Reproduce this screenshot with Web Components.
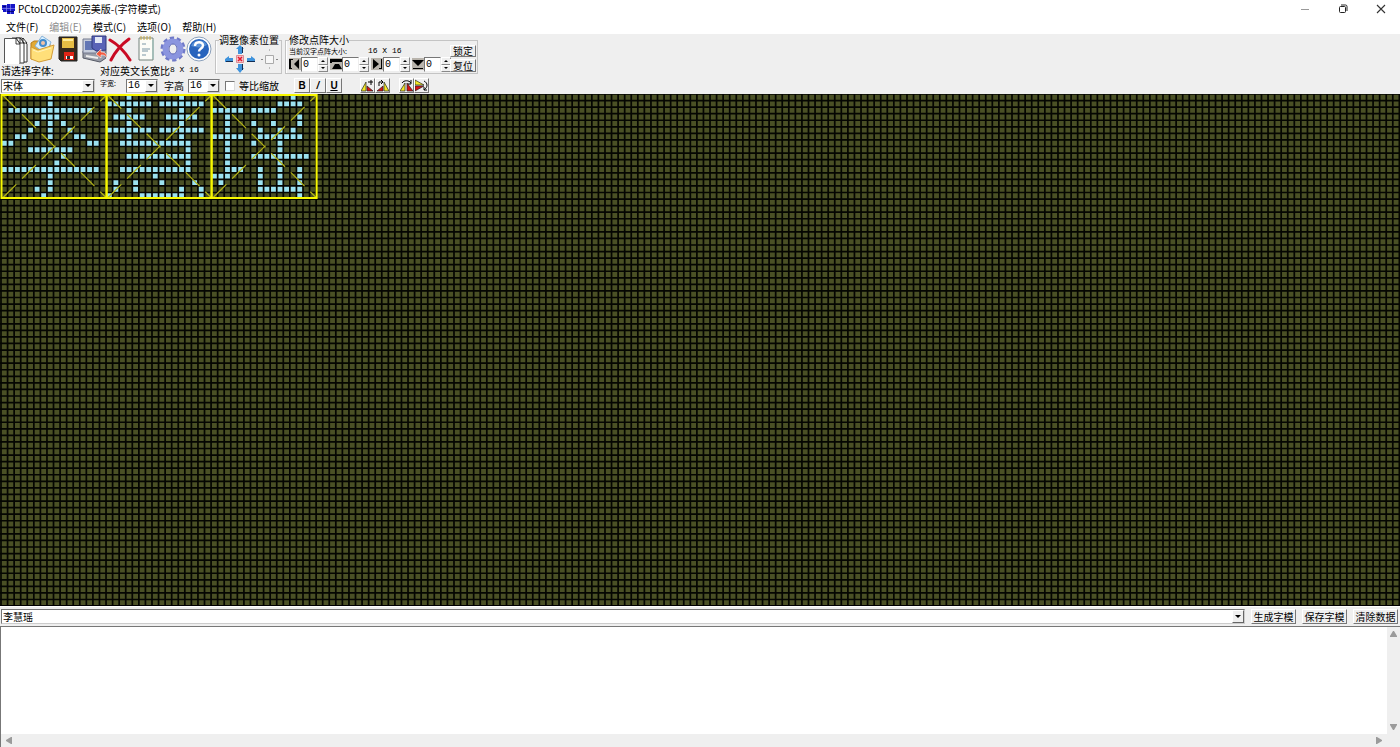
<!DOCTYPE html>
<html lang="zh-CN">
<head>
<meta charset="utf-8">
<title>PCtoLCD2002完美版-(字符模式)</title>
<style>
html,body{margin:0;height:100%}
body{font:10px/12px "Noto Sans CJK SC","Noto Sans",sans-serif;color:#000;background:#efefef;overflow:hidden}
</style>
</head>
<body>
<lcd-app></lcd-app>
<script>
const define = (name, html, setup) => customElements.define(name, class extends HTMLElement {
  connectedCallback() {
    if (this.shadowRoot) return;
    const t = document.createElement('template');
    t.innerHTML = typeof html === 'function' ? html(this) : html;
    this.attachShadow({mode: 'open'}).appendChild(t.content.cloneNode(true));
    if (setup) setup(this);
  }
});

define('title-bar', `<style>
:host{display:flex;align-items:center;height:18px;background:#fff;padding-left:2px;gap:3px}
.logo{width:13px;height:12px}
h1{font:inherit;margin:0;flex:1;line-height:18px}
button{border:0;background:none;padding:0;width:38px;height:18px;display:grid;place-items:center}
nav{display:flex}
</style>
<svg class="logo" viewBox="0 0 13 12"><path fill="#1616c8" d="M0 2h5V1h8v7h-1v3H5V9H1V7H0z"/><path stroke="#9a9af0" stroke-width=".6" d="M4.500 2v7M8.500 1v10M0 5.500h13"/><path stroke="#000060" stroke-width=".8" d="M5 8.500h7M1 3.500h3"/></svg>
<h1><slot></slot></h1>
<nav>
<button aria-label="最小化"><svg width="10" height="10"><path d="M1 5.500h8" stroke="#999"/></svg></button>
<button aria-label="还原"><svg width="10" height="10" fill="none" stroke="#222"><rect x="1.500" y="2.500" width="6" height="6" rx="1"/><path d="M3 1h4.500a1.500 1.500 0 0 1 1.500 1.500V7"/></svg></button>
<button aria-label="关闭"><svg width="10" height="10"><path d="M1 1l8 8M9 1l-8 8" stroke="#333" stroke-width="1.100"/></svg></button>
</nav>`);

define('menu-bar', `<style>
:host{display:flex;align-items:end;height:16px;background:#fff;padding-left:6px;gap:11px}
</style><slot></slot>`);
define('menu-item', el => `<style>
:host{display:block}
button{font:inherit;line-height:14px;border:0;padding:0;background:none;color:#000;display:block}
button:disabled{color:#8c8c8c}
</style><button ${el.hasAttribute('disabled') ? 'disabled' : ''}><slot></slot></button>`);

define('flat-button', el => `<style>
:host{display:block}
button{box-sizing:border-box;width:100%;height:100%;font:inherit;line-height:10px;padding:0;display:grid;place-items:center;color:#000;background:#efefef;border:1px solid;border-color:#fff #777 #777 #fff;white-space:nowrap}
</style><button aria-label="${el.getAttribute('label') || el.textContent}"><slot></slot></button>`);

define('tool-button', el => `<style>
:host{display:block;width:26px;height:30px}
button{border:0;background:none;padding:0;width:100%;height:100%;display:block}
::slotted(svg){display:block;width:26px;height:30px}
</style><button aria-label="${el.getAttribute('label')}"><slot></slot></button>`);

define('group-box', el => `<style>
:host{display:block}
fieldset{box-sizing:border-box;height:100%;margin:0;min-width:0;padding:0 1px 0 3px;border:1px solid #c4c4c4;box-shadow:inset 1px 0 #fff}
legend{padding:0;line-height:10px;height:10px;white-space:nowrap}
</style><fieldset><legend>${el.getAttribute('label')}</legend><slot></slot></fieldset>`);

define('spin-box', el => `<style>
:host{display:flex;height:15px;width:39px}
input{box-sizing:border-box;width:17px;height:15px;font:10px/12px "Liberation Mono",monospace;padding:0 0 0 1px;background:#fff;border:1px solid;border-color:#777 #eee #eee #777;border-radius:0;appearance:textfield;margin:0;color:#000}
input::-webkit-inner-spin-button{appearance:none;display:none}
.arrows{display:flex;flex-direction:column;width:10px}
.arrows button{box-sizing:border-box;flex:1;min-height:0;padding:0;border:1px solid;border-color:#fff #888 #888 #fff;background:#efefef;display:grid;place-items:center}
</style><slot></slot><input type="number" value="0" aria-label="${el.getAttribute('label')}"><span class="arrows"><button aria-label="增加"><svg width="4" height="2"><path d="M0 2l2-2 2 2z"/></svg></button><button aria-label="减少"><svg width="4" height="2"><path d="M0 0h4l-2 2z"/></svg></button></span>`);

const combo = (id, value, label) => `<span class="combo"><select id="${id}" ${label ? `aria-label="${label}"` : ''}><option>${value}</option></select><i><svg width="6" height="3"><path d="M0 0h6l-3 3z"/></svg></i></span>`;
const comboCss = `
.combo{display:grid;box-sizing:border-box;border:1px solid;border-color:#777 #ccc #ccc #777;background:#fff;height:14px}
.combo select{grid-area:1/1;appearance:none;border:0;border-radius:0;background:none;margin:0;padding:0 0 0 1px;font:inherit;line-height:12px;height:12px;width:100%;color:#000}
.combo i{grid-area:1/1;justify-self:end;box-sizing:border-box;width:12px;height:12px;display:grid;place-items:center;background:#efefef;border:1px solid;border-color:#fff #666 #666 #fff;pointer-events:none}`;

define('tool-bar', `<style>
:host{display:flex;flex-direction:column;height:60px;background:#efefef;box-sizing:border-box}
.top{display:flex;height:43px}
.left{width:215px;display:flex;flex-direction:column}
.icons{display:flex;padding:1px 0 0 4px;height:29px}
.caps{display:flex;line-height:13px;padding-left:1px;height:13px}
.caps label{width:99px}
.mono{font:8px/12px "Liberation Mono",monospace}
group-box{margin-top:1px;height:39px}
.pos{width:67px}
.size{width:193px;margin-left:3px}
.pad{display:flex;align-items:center;justify-content:space-between;height:28px;padding:0 2px 0 5px}
.cols{display:grid;grid-template-columns:161px 26px;height:27px}
.info{display:flex;height:12px;align-items:center;font-size:7px;gap:21px}
.spins{display:flex;gap:2px}
.pic{display:block}
.locks{display:grid;grid-template-rows:12px 13px;gap:2px}
.bottom{display:flex;align-items:center;height:17px;padding-left:1px;box-sizing:border-box}
${comboCss}
.font{width:94px}
.num{width:32px;font-family:"Liberation Mono",monospace}
.bottom .small{font-size:7px;width:26px;margin-left:5px;align-self:start}
.bottom .high{margin:0 4px 0 6px}
.num .combo{width:32px}
.check{display:flex;align-items:center;gap:4px;margin-left:5px;width:69px}
.check input{appearance:none;box-sizing:border-box;width:10px;height:10px;margin:0;background:#fff;border:1px solid;border-color:#777 #ddd #ddd #777}
.btns{display:flex}
.btns flat-button{width:16px;height:15px;font:bold 10px/12px "Liberation Sans",sans-serif}
.btns svg{display:block}
.rot{margin-left:18px}.rot flat-button,.flip flat-button{width:15px}.flip{margin-left:9px}
</style>
<div class="top">
 <div class="left">
  <div class="icons">
  <tool-button label="新建"><svg viewBox="0 0 26 30"><path d="M0 29V4h12l4 5v20z" fill="#fff"/><path d="M12 3h6l5 6v18h-5" fill="#fff" stroke="#333"/><path d="M8 3h8l4 5v20h-5" fill="#fff" stroke="#333"/><path d="M.5 28V3.500H12l4 5V28" fill="#fff" stroke="#555"/><path d="M12 3v6h4zM16 3v5h4zM19 3v5h4z" fill="#fff" stroke="#111" stroke-width=".8"/></svg></tool-button>
  <tool-button label="打开"><svg viewBox="0 0 26 30"><path d="M1 8l3-2h5l2 3h9v15H1z" fill="#e2aa34" stroke="#b77c1c"/><path d="M12 1l9 6-5 12-11-8z" fill="#d8efff" stroke="#88b3d8"/><circle cx="13" cy="8" r="4" fill="#438ccc"/><circle cx="13" cy="8" r="2" fill="#f2c3a7"/><path d="M1 12l7 3 16-5-3 14-12 3-8-3z" fill="#ffdf79" stroke="#d29b36"/><path d="M3 15l5 2 13-4" stroke="#fff4ba" fill="none"/></svg></tool-button>
  <tool-button label="保存"><svg viewBox="0 0 26 30"><path d="M3 2h18v24H5l-2-2z" fill="#37291c" stroke="#222"/><path d="M6 3h12v10H6z" fill="#e7bd45"/><path d="M7 4h10v2H7z" fill="#ffec9b"/><path d="M8 17h10v8H8z" fill="#e12516"/><path d="M10 21h7v3h-7z" fill="#fff"/><path d="M11 21h3v3h-3z" fill="#333"/></svg></tool-button>
  <tool-button label="另存为"><svg viewBox="0 0 26 30"><path d="M1 16l5-4 18 3v8l-6 4-17-4z" fill="#999da8" stroke="#555965"/><path d="M1 4h14v14H1z" fill="#c7cedc" stroke="#73798d"/><path d="M3 6h10v9H3z" fill="#6276b5"/><path d="M10 1h14v14l-10 1-4-3z" fill="#5962b6" stroke="#30387d"/><path d="M13 2h7v6h-7z" fill="#e3e8f5"/><path d="M4 21l12 2" stroke="#eee" stroke-width="2"/><path d="M25 23c0-5-3-6-6-6v-3l-5 5 5 4v-3c3 0 4 0 6 3z" fill="#f35b3e" stroke="#fff" stroke-width=".6"/></svg></tool-button>
  <tool-button label="删除"><svg viewBox="0 0 26 30"><path d="M2 5c9 5 15 12 20 20M21 4C14 9 7 17 3 25" stroke="#c90a23" stroke-width="3" stroke-linecap="round" fill="none"/></svg></tool-button>
  <tool-button label="文档"><svg viewBox="0 0 26 30"><path d="M5 3h14v22H5z" fill="#fcfcf7" stroke="#75837c"/><path d="M7 1v4M10 1v4M13 1v4M16 1v4" stroke="#c4a643"/><path d="M8 9h4M8 14h8M8 16h6M8 20h4" stroke="#7a96a5"/><path d="M19 5v19" stroke="#a5bdb8" stroke-width="2"/></svg></tool-button>
  <tool-button label="选项"><svg viewBox="0 0 26 30"><circle cx="13" cy="14" r="11" fill="none" stroke="#6f79c8" stroke-width="3" stroke-dasharray="4.200 2.710"/><circle cx="13" cy="14" r="7.500" fill="none" stroke="#8b95df" stroke-width="6"/><ellipse cx="13" cy="14" rx="4" ry="5" fill="#efefef" stroke="#6069b5"/></svg></tool-button>
  <tool-button label="帮助"><svg viewBox="0 0 26 30"><circle cx="13" cy="14" r="12" fill="#fff" stroke="#8ba0bb"/><circle cx="13" cy="14" r="10" fill="#2864bd"/><path d="M5 11c3-7 13-7 16-1-5 3-10 3-16 1z" fill="#7aafe7" opacity=".6"/><path d="M9 11c0-5 8-5 8-.500 0 3-4 3-4 6" fill="none" stroke="#fff" stroke-width="2.400"/><circle cx="13" cy="20" r="1.500" fill="#fff"/></svg></tool-button>
  </div>
  <div class="caps"><label for="font">请选择字体:</label><span>对应英文长宽比</span><span class="mono">8 X 16</span></div>
 </div>
 <group-box class="pos" label="调整像素位置"><div class="pad">
  <svg width="32" height="28" viewBox="0 0 32 28"><g fill="#3f93dc"><path d="M16 0l4 4h-2v5h-4V4h-2z"/><path d="M14 19h4v4h2l-4 5-4-5h2z"/><path d="M1 14l4-3v2h4v4H1z"/><path d="M31 14l-4-3v2h-4v4h8z"/></g><path stroke="#112c52" d="M18.500 2v6M18.500 19v6M2 16.500h7M23 16.500h8"/><path fill="#f6c6cc" stroke="#dd8b95" d="M12.500 10.500h7v7h-7z"/><path d="M14 12l4 4M18 12l-4 4" stroke="#e3152c" stroke-width="1.500"/></svg>
  <svg width="17" height="24" viewBox="0 0 17 24"><path d="M4.500 8.500h8v8h-8z" fill="#f7f7f7" stroke="#aaa"/><path d="M8 3h1M0 12.500h2M15 12.500h2M8 21h1" stroke="#888"/></svg>
 </div></group-box>
 <group-box class="size" label="修改点阵大小"><div class="cols"><div>
  <div class="info"><span>当前汉字点阵大小:</span><span class="mono">16 X 16</span></div>
  <div class="spins">
  <spin-box label="左"><svg class="pic" width="12" height="14"><path fill="#b9b4ac" d="M0 1h12v12H0z"/><path d="M0 2h4v1H2v8h1v1H0zM10 2v10L5 7z"/></svg></spin-box>
  <spin-box label="上"><svg class="pic" width="12" height="14"><path fill="#b9b4ac" d="M0 1h12v12H0z"/><path d="M0 2h12v3H2v1H0zM2 12l3-5h4l3 5z"/></svg></spin-box>
  <spin-box label="右"><svg class="pic" width="12" height="14"><path fill="#b9b4ac" d="M0 1h12v12H0z"/><path d="M2 2v10l6-5zM10 2h1v10h-3v-1h2z"/></svg></spin-box>
  <spin-box label="下"><svg class="pic" width="12" height="14"><path fill="#b9b4ac" d="M0 1h12v12H0z"/><path d="M0 3h12L6 9zM1 11h10v1H1z"/></svg></spin-box>
  </div></div>
  <div class="locks"><flat-button>锁定</flat-button><flat-button>复位</flat-button></div>
 </div></group-box>
</div>
<div class="bottom">
 <div class="font">${combo('font', '宋体')}</div>
 <label class="small" for="w">字宽:</label><div class="num">${combo('w', '16')}</div>
 <label class="high" for="h">字高</label><div class="num">${combo('h', '16')}</div>
 <label class="check"><input type="checkbox">等比缩放</label>
 <div class="btns"><flat-button>B</flat-button><flat-button><i>/</i></flat-button><flat-button><u>U</u></flat-button></div>
 <div class="btns rot">
  <flat-button label="左旋"><svg width="13" height="13"><path d="M0 12l5-9v9z" fill="#f4ea25" stroke="#222" stroke-width=".7"/><path d="M6 12V7l6 5z" fill="#d81414" stroke="#222" stroke-width=".7"/><path d="M7 3h5M10 1v5" fill="none" stroke="#000"/></svg></flat-button>
  <flat-button label="右旋"><svg width="13" height="13"><path d="M13 12L8 3v9z" fill="#f4ea25" stroke="#222" stroke-width=".7"/><path d="M7 12V7l-6 5z" fill="#d81414" stroke="#222" stroke-width=".7"/><path d="M7 3H3v4M5 1l2 2-2 2" fill="none" stroke="#000"/></svg></flat-button>
 </div>
 <div class="btns flip">
  <flat-button label="左右翻转"><svg width="13" height="13"><path d="M0 12l5-8v8z" fill="#f4ea25" stroke="#222" stroke-width=".7"/><path d="M7 4v8h6z" fill="#d81414" stroke="#222" stroke-width=".7"/><path d="M2 4c2-3 7-3 9 0M11 1v4H8" fill="none" stroke="#000"/></svg></flat-button>
  <flat-button label="上下翻转"><svg width="13" height="13"><path d="M0 1l9 5H0z" fill="#f4ea25" stroke="#222" stroke-width=".7"/><path d="M0 12l9-5H0z" fill="#d81414" stroke="#222" stroke-width=".7"/><path d="M9 2c4 2 4 6 0 9M9 8v3h3" fill="none" stroke="#000"/></svg></flat-button>
 </div>
</div>`);

/* Each row lists the lit columns of a 16x16 glyph. */
const glyphs = [
 ['7','7','1-13','6-8','5,7,9','4,7,10','2-3,7,11-12','0-1,13-14','4-10','9','8','0-14','7','7','5,7','6'],
 ['3,11','0-6,8-14','3,11','1-5,9-13','3,11','0-6,8-14','3,11','2-12','12','3-12','12','2-12','7','1,4,8,13','1,4,11,14','0,5-11,14'],
 ['12','10-13','0-4,6-9','2,13','2,6,9,13','2,7,10,12','0-4,7-13','2,6,10','2,10','2,6-14','2,10','2-4,7,10,13','0-2,7,10,13','1,7,10,13','7-13','13']
];
define('lcd-matrix', `<style>
:host{display:block;overflow:hidden;background:#4a5025;box-sizing:border-box;border-bottom:1px solid #000}
svg{display:block;width:100%;height:100%}
</style><svg role="img" aria-label="点阵预览"><path id="lit" fill="#9ce2f0"/><path id="grid" stroke="#050602" stroke-width="1.700"/><g id="boxes" fill="none"/></svg>`, el => {
  const P = 6.565, X = 1, root = el.shadowRoot;
  let grid = '', lit = '', boxes = '';
  for (let c = 0; c < 620; c++) grid += `M${(X + c * P).toFixed(2)} 0V2400`;
  for (let r = 0; r < 360; r++) grid += `M0 ${(r * P).toFixed(2)}H4000`;
  glyphs.forEach((rows, g) => {
    rows.forEach((row, r) => row.split(',').forEach(run => {
      const [a, b = a] = run.split('-').map(Number);
      for (let c = a; c <= b; c++) lit += `M${X + (g * 16 + c) * P} ${r * P}h${P}v${P}h${-P}z`;
    }));
    const l = X + g * 16 * P + .5, r = l + 16 * P, t = 1, b = 16 * P - 1;
    boxes += `<path d="M${l + 1} ${t}L${r} ${b}M${l + 1} ${b}L${r} ${t}" stroke="#b4b414" stroke-width="1.200" stroke-dasharray="19.500 8"/><path d="M${l} ${t}H${r}V${b}H${l}z" stroke="#f8f800" stroke-width="2"/>`;
  });
  root.getElementById('grid').setAttribute('d', grid);
  root.getElementById('lit').setAttribute('d', lit);
  root.getElementById('boxes').innerHTML = boxes;
});

define('input-row', `<style>
:host{display:flex;align-items:center;height:20px;background:#efefef;border-top:1px solid #fff;box-sizing:border-box;padding:0 2px 0 1px;gap:6px}
${comboCss}
.combo{flex:1;height:15px}
.combo select,.combo i{height:13px}
flat-button{width:45px;height:15px}
</style>${combo('text', '李慧瑶', '输入文字')}<flat-button>生成字模</flat-button><flat-button>保存字模</flat-button><flat-button>清除数据</flat-button>`);

define('memo-pane', `<style>
:host{display:grid;grid-template:1fr 13px/1fr 13px;height:121px;box-sizing:border-box;border:solid #777;border-width:1px 0 0 1px;background:#efefef}
textarea{border:0;margin:0;padding:2px;resize:none;background:#fff;font:inherit;outline:0;overflow:hidden;border-radius:0}
div{display:flex;justify-content:space-between;align-items:center}
.v{flex-direction:column;padding:4px 0}
.h{padding:0 5px}
svg{display:block;fill:#9b9b9b}
</style><textarea aria-label="输出数据"></textarea>
<div class="v"><svg width="7" height="6"><path d="M0 6V5l3-5h1l3 5v1z"/></svg><svg width="7" height="6"><path d="M0 0v1l3 5h1l3-5V0z"/></svg></div>
<div class="h"><svg width="6" height="7"><path d="M6 0H5L0 3v1l5 3h1z"/></svg><svg width="6" height="7"><path d="M0 0h1l5 3v1L1 7H0z"/></svg></div>`);

define('lcd-app', `<style>
:host{display:flex;flex-direction:column;height:100vh}
title-bar,menu-bar,tool-bar,input-row,memo-pane{flex:none}
lcd-matrix{flex:1;min-height:0}
</style>
<title-bar>PCtoLCD2002完美版-(字符模式)</title-bar>
<menu-bar><menu-item>文件(F)</menu-item><menu-item disabled>编辑(E)</menu-item><menu-item>模式(C)</menu-item><menu-item>选项(O)</menu-item><menu-item>帮助(H)</menu-item></menu-bar>
<tool-bar></tool-bar>
<lcd-matrix></lcd-matrix>
<input-row></input-row>
<memo-pane></memo-pane>`);
</script>
</body>
</html>
